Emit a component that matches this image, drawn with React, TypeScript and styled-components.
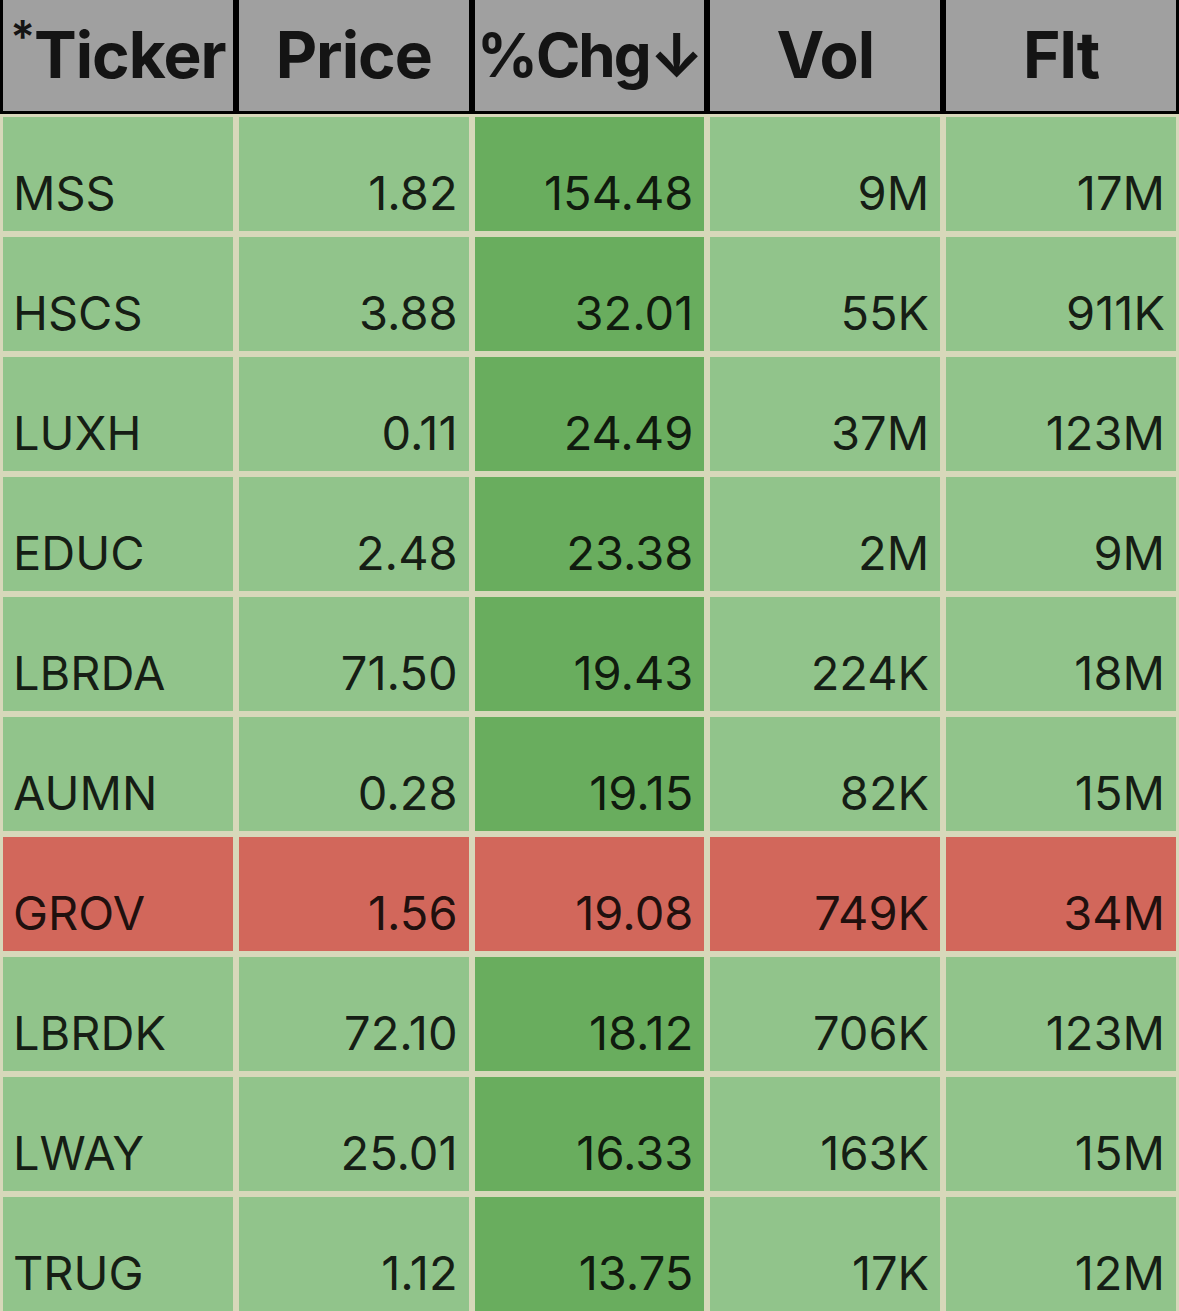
import React from 'react';
import styled, { createGlobalStyle } from 'styled-components';

type Tone = 'light' | 'dark' | 'red';

interface Row {
  ticker: string;
  price: string;
  chg: string;
  vol: string;
  flt: string;
  down?: boolean;
}

const rows: Row[] = [
  { ticker: 'MSS', price: '1.82', chg: '154.48', vol: '9M', flt: '17M' },
  { ticker: 'HSCS', price: '3.88', chg: '32.01', vol: '55K', flt: '911K' },
  { ticker: 'LUXH', price: '0.11', chg: '24.49', vol: '37M', flt: '123M' },
  { ticker: 'EDUC', price: '2.48', chg: '23.38', vol: '2M', flt: '9M' },
  { ticker: 'LBRDA', price: '71.50', chg: '19.43', vol: '224K', flt: '18M' },
  { ticker: 'AUMN', price: '0.28', chg: '19.15', vol: '82K', flt: '15M' },
  { ticker: 'GROV', price: '1.56', chg: '19.08', vol: '749K', flt: '34M', down: true },
  { ticker: 'LBRDK', price: '72.10', chg: '18.12', vol: '706K', flt: '123M' },
  { ticker: 'LWAY', price: '25.01', chg: '16.33', vol: '163K', flt: '15M' },
  { ticker: 'TRUG', price: '1.12', chg: '13.75', vol: '17K', flt: '12M' },
];

const toneColors: Record<Tone, string> = {
  light: '#91c48b',
  dark: '#69ad5e',
  red: '#d2675b',
};

const App: React.FC = () => {
  return (
    <>
      <GlobalStyle />
      <Table>
        <HeaderRow>
          <HeaderCell>
            <Star>*</Star>Ticker
          </HeaderCell>
          <HeaderCell>Price</HeaderCell>
          <HeaderCell $tight>%Chg↓</HeaderCell>
          <HeaderCell>Vol</HeaderCell>
          <HeaderCell>Flt</HeaderCell>
        </HeaderRow>
        <Body>
          {rows.map((r) => {
            const base: Tone = r.down ? 'red' : 'light';
            const sorted: Tone = r.down ? 'red' : 'dark';
            return (
              <React.Fragment key={r.ticker}>
                <Cell $tone={base}>{r.ticker}</Cell>
                <Cell $tone={base} $numeric>{r.price}</Cell>
                <Cell $tone={sorted} $numeric>{r.chg}</Cell>
                <Cell $tone={base} $numeric>{r.vol}</Cell>
                <Cell $tone={base} $numeric>{r.flt}</Cell>
              </React.Fragment>
            );
          })}
        </Body>
      </Table>
    </>
  );
};

const GlobalStyle = createGlobalStyle`
  html, body {
    margin: 0;
    padding: 0;
    background: #d7d8ba;
  }
  body {
    font-family: Inter, "Liberation Sans", sans-serif;
  }
`;

const Table = styled.div`
  width: 1179px;
  height: 1311px;
  overflow: hidden;
  background: #d7d8ba;
`;

const HeaderRow = styled.div`
  display: grid;
  grid-template-columns: repeat(5, minmax(0, 1fr));
  column-gap: 6px;
  padding: 0 3px 3px;
  background: #000;
`;

const HeaderCell = styled.div<{ $tight?: boolean }>`
  height: 111px;
  background: #a0a0a0;
  display: flex;
  align-items: center;
  justify-content: center;
  font-size: ${(p) => (p.$tight ? '60px' : '64px')};
  letter-spacing: ${(p) => (p.$tight ? '-2px' : '-1px')};
  font-weight: 700;
  color: #141414;
  line-height: 1;
  padding-bottom: 2px;
  box-sizing: border-box;
  white-space: nowrap;
  overflow: hidden;
`;

const Star = styled.span`
  font-size: 46px;
  font-weight: 600;
  position: relative;
  top: -18px;
  margin-right: 0;
`;

const Body = styled.div`
  display: grid;
  grid-template-columns: repeat(5, minmax(0, 1fr));
  grid-auto-rows: 114px;
  gap: 6px;
  padding: 3px 3px 0;
`;

const Cell = styled.div<{ $tone: Tone; $numeric?: boolean }>`
  background: ${(p) => toneColors[p.$tone]};
  display: flex;
  align-items: flex-end;
  justify-content: ${(p) => (p.$numeric ? 'flex-end' : 'flex-start')};
  padding: 0 ${(p) => (p.$numeric ? '11px' : '0')} 15px ${(p) => (p.$numeric ? '0' : '10px')};
  font-size: 47px;
  line-height: 1;
  color: rgba(0, 0, 0, 0.86);
  box-sizing: border-box;
`;

export default App;
